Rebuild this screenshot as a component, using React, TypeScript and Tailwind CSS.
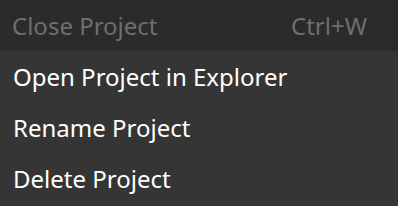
import React from "react";

const font = { fontFamily: '"Noto Sans", "Open Sans", sans-serif' };

export default function App() {
  return (
    <div className="w-[398px] h-[206px] bg-[#353535] flex flex-col overflow-hidden text-[24px] leading-none" style={font}>
      <div className="h-[51px] bg-[#2b2b2b] flex items-center justify-between pl-[12px] pr-[31px] text-[#6e6e6e]">
        <span>Close Project</span>
        <span>Ctrl+W</span>
      </div>
      <div className="h-[51px] flex items-center pl-[13px] text-white">Open Project in Explorer</div>
      <div className="h-[51px] flex items-center pl-[13px] text-white">Rename Project</div>
      <div className="h-[51px] flex items-center pl-[13px] text-white">Delete Project</div>
    </div>
  );
}
